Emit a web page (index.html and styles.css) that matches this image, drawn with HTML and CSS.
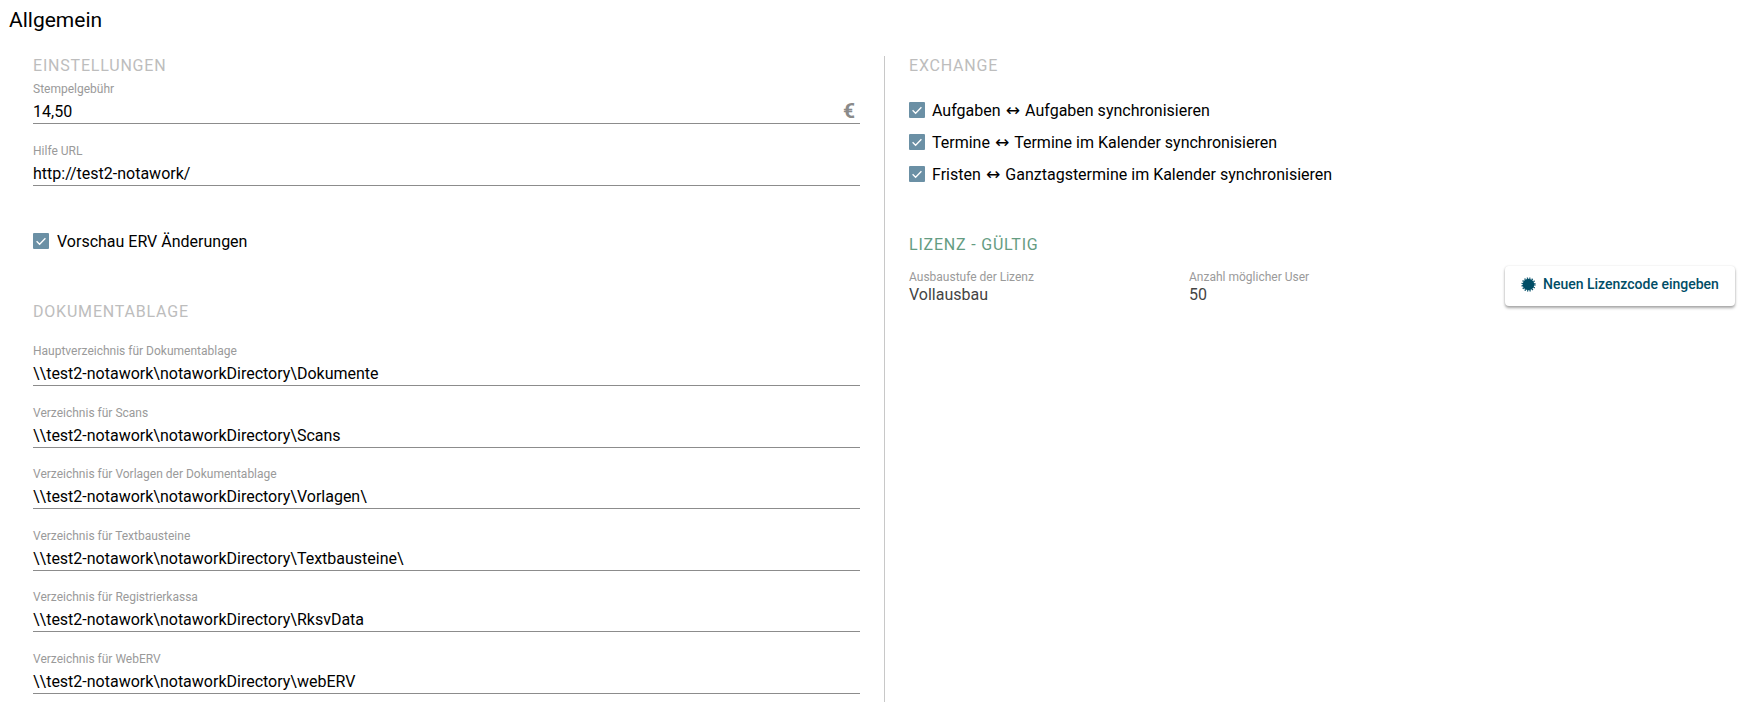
FILE: index.html
```html
<!DOCTYPE html>
<html lang="de">
<head>
<meta charset="utf-8">
<title>Allgemein</title>
<link rel="stylesheet" href="styles.css">
</head>
<body>
<h1 class="page-title">Allgemein</h1>
<div class="columns">
  <section class="col col-left">
    <h2 class="heading">EINSTELLUNGEN</h2>
    <div class="field field-first">
      <div class="label">Stempelgebühr</div>
      <div class="value">14,50<span class="suffix">€</span></div>
    </div>
    <div class="field">
      <div class="label">Hilfe URL</div>
      <div class="value">http://test2-notawork/</div>
    </div>
    <label class="check check-erv"><span class="box"><svg viewBox="0 0 16 16"><path d="M3.6 8.2l3 3 5.8-6" /></svg></span>Vorschau ERV Änderungen</label>
    <h2 class="heading heading-doc">DOKUMENTABLAGE</h2>
    <div class="field-list">
      <div class="field"><div class="label">Hauptverzeichnis für Dokumentablage</div><div class="value">\\test2-notawork\notaworkDirectory\Dokumente</div></div>
      <div class="field"><div class="label">Verzeichnis für Scans</div><div class="value">\\test2-notawork\notaworkDirectory\Scans</div></div>
      <div class="field"><div class="label">Verzeichnis für Vorlagen der Dokumentablage</div><div class="value">\\test2-notawork\notaworkDirectory\Vorlagen\</div></div>
      <div class="field"><div class="label">Verzeichnis für Textbausteine</div><div class="value">\\test2-notawork\notaworkDirectory\Textbausteine\</div></div>
      <div class="field"><div class="label">Verzeichnis für Registrierkassa</div><div class="value">\\test2-notawork\notaworkDirectory\RksvData</div></div>
      <div class="field"><div class="label">Verzeichnis für WebERV</div><div class="value">\\test2-notawork\notaworkDirectory\webERV</div></div>
    </div>
  </section>
  <section class="col col-right">
    <h2 class="heading">EXCHANGE</h2>
    <div class="checks">
      <label class="check"><span class="box"><svg viewBox="0 0 16 16"><path d="M3.6 8.2l3 3 5.8-6" /></svg></span><span>Aufgaben <span class="arrow">↔</span> Aufgaben synchronisieren</span></label>
      <label class="check"><span class="box"><svg viewBox="0 0 16 16"><path d="M3.6 8.2l3 3 5.8-6" /></svg></span><span>Termine <span class="arrow">↔</span> Termine im Kalender synchronisieren</span></label>
      <label class="check"><span class="box"><svg viewBox="0 0 16 16"><path d="M3.6 8.2l3 3 5.8-6" /></svg></span><span>Fristen <span class="arrow">↔</span> Ganztagstermine im Kalender synchronisieren</span></label>
    </div>
    <h2 class="heading heading-ok">LIZENZ - GÜLTIG</h2>
    <div class="license">
      <div class="info info-a"><div class="label">Ausbaustufe der Lizenz</div><div class="info-value">Vollausbau</div></div>
      <div class="info info-b"><div class="label">Anzahl möglicher User</div><div class="info-value">50</div></div>
      <button class="btn" type="button">
        <svg class="btn-icon" viewBox="0 0 16 16"><circle class="btn-icon-core" cx="8" cy="8" r="6.200"/><circle class="btn-icon-teeth" cx="8" cy="8" r="6.800"/></svg>
        Neuen Lizenzcode eingeben
      </button>
    </div>
  </section>
</div>
</body>
</html>
```
FILE: styles.css
```css
* { box-sizing: border-box; }
html, body { margin: 0; height: 702px; overflow: hidden; background: #fff; }
body { font-family: Roboto, "Liberation Sans", sans-serif; color: #000; position: relative; }
.page-title { margin: 0; padding: 8px 0 0 9px; height: 56px; font-size: 21px; font-weight: 400; line-height: 24px; }
.columns { display: flex; height: 646px; }
.col-left { width: 884px; padding-left: 33px; padding-right: 24px; }
.col-right { flex: 1; border-left: 1px solid #c8c8c8; padding-left: 24px; padding-right: 22px; }
.heading { margin: 0; font-size: 16px; font-weight: 400; line-height: 19px; letter-spacing: .8px; color: #bdbdbd; }
.heading-doc { margin-top: 45px; }
.heading-ok { color: #659c82; margin-top: 45px; }
.field { height: 62px; display: flex; flex-direction: column; justify-content: flex-end; border-bottom: 1px solid #8c8c8c; }
.field-first { height: 49px; }
.label { font-size: 12px; line-height: 14px; color: #9a9a9a; }
.value { display: flex; justify-content: space-between; font-size: 16px; line-height: 19px; height: 27px; padding-top: 6px; }
.suffix { font-size: 21px; font-weight: 700; color: #8a8a8a; padding-right: 5px; line-height: 19px; }
.check { display: flex; align-items: center; gap: 7px; font-size: 16px; line-height: 19px; height: 32px; }
.check-erv { margin-top: 39px; gap: 8px; }
.arrow { font-family: "DejaVu Sans", sans-serif; font-size: 17px; line-height: 16px; margin: 0 1.200px; }
.box { width: 16px; height: 16px; background: #6b90a5; border-radius: 1px; display: block; flex: none; }
.box svg { display: block; width: 16px; height: 16px; fill: none; stroke: #fff; stroke-width: 1.300; }
.field-list { margin-top: 3.400px; }
.field-list .field { height: 61.6px; }
.checks { margin-top: 19px; }
.license { display: flex; align-items: flex-start; margin-top: 16px; position: relative; }
.info { font-size: 16px; }
.info-a { width: 280px; }
.info-b { flex: 1; }
.info-value { font-size: 16px; line-height: 19px; padding-top: 1px; color: #444; }
.btn { width: 230px; height: 40px; margin-top: -4px; display: flex; align-items: center; gap: 7px; padding: 0 0 4px 16px; border: 0; border-radius: 4px; background: #fff; color: #004d66; font: 500 14px Roboto, sans-serif; box-shadow: 0 2px 3px rgba(0,0,0,.35), 0 0 2px rgba(0,0,0,.1); }
.btn-icon { width: 15px; height: 15px; flex: none; overflow: visible; }
.btn-icon-core { fill: #004d66; }
.btn-icon-teeth { fill: none; stroke: #004d66; stroke-width: 1.500; stroke-dasharray: 1.335 1.335; }
```
